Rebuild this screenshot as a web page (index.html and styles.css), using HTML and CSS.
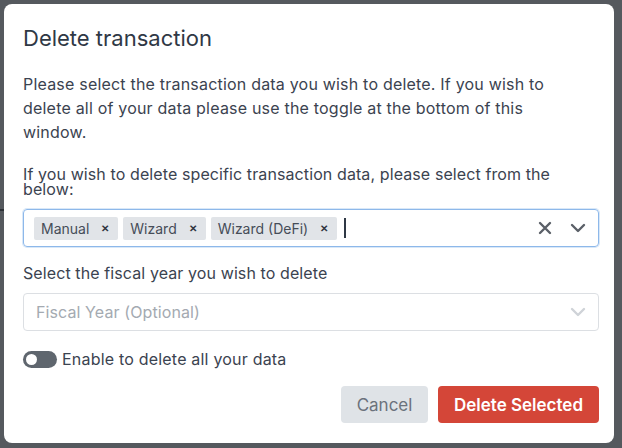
FILE: index.html
```html
<!DOCTYPE html>
<html lang="en">

<head>
    <title>Delete transaction</title>
    <link rel="stylesheet" href="styles.css">
</head>

<body>
    <div class="backdrop-line"></div>
    <div class="modal">
        <h2 class="title">Delete transaction</h2>
        <p class="intro">Please select the transaction data you wish to delete. If you wish to delete all of your data please use the toggle at the bottom of this window.</p>

        <label class="label label-tight">If you wish to delete specific transaction data, please select from the below:</label>
        <div class="multi focused">
            <div class="chips">
                <span class="chip">Manual <span class="chip-x">&#x2715;</span></span>
                <span class="chip">Wizard <span class="chip-x">&#x2715;</span></span>
                <span class="chip">Wizard (DeFi) <span class="chip-x">&#x2715;</span></span>
                <span class="caret"></span>
            </div>
            <div class="indicators">
                <svg class="clear" width="14" height="14" viewBox="0 0 14 14">
                    <path d="M2 2 L12 12 M12 2 L2 12" stroke="#5b6068" stroke-width="2.4" stroke-linecap="round" />
                </svg>
                <svg class="chevron" width="16" height="10" viewBox="0 0 16 10">
                    <path d="M2 2 L8 8 L14 2" fill="none" stroke="#5b6068" stroke-width="2.4" stroke-linecap="round" stroke-linejoin="round" />
                </svg>
            </div>
        </div>

        <label class="label label-fiscal">Select the fiscal year you wish to delete</label>
        <div class="multi select">
            <span class="placeholder">Fiscal Year (Optional)</span>
            <svg class="chevron" width="16" height="10" viewBox="0 0 16 10">
                <path d="M2 2 L8 8 L14 2" fill="none" stroke="#cfd3d8" stroke-width="2.4" stroke-linecap="round" stroke-linejoin="round" />
            </svg>
        </div>

        <div class="toggle-row">
            <span class="toggle"><span class="knob"></span></span>
            <span>Enable to delete all your data</span>
        </div>

        <div class="actions">
            <button class="btn btn-cancel">Cancel</button>
            <button class="btn btn-delete">Delete Selected</button>
        </div>
    </div>
</body>

</html>
```

FILE: styles.css
```css
body {
    margin: 0;
    background: #55595e;
    font-family: Inter, "Noto Sans", sans-serif;
    color: #3b4350;
    width: 622px;
    height: 448px;
    overflow: hidden;
    position: relative;
}

.backdrop-line {
    position: absolute;
    left: 0;
    top: 209px;
    width: 4px;
    height: 2px;
    background: #2c3036;
}

.modal {
    box-sizing: border-box;
    margin: 4px 0 0 4px;
    width: 610px;
    height: 439px;
    background: #fff;
    border-radius: 8px;
    padding: 21px 15px 0 19px;
    display: flex;
    flex-direction: column;
}

.title {
    margin: 0;
    font-size: 22px;
    line-height: 26px;
    font-weight: 400;
    color: #2f3845;
}

.intro {
    margin: 21px 0 0;
    max-width: 560px;
    font-size: 16px;
    line-height: 24px;
    letter-spacing: 0.2px;
}

.label {
    display: block;
    font-size: 16px;
    letter-spacing: 0.1px;
}

.label-tight {
    margin-top: 23px;
    line-height: 15px;
}

.label-fiscal {
    margin-top: 16px;
    line-height: 20px;
}

.multi {
    box-sizing: border-box;
    height: 38px;
    border: 1px solid #dcdfe3;
    border-radius: 4px;
    display: flex;
    align-items: center;
    justify-content: space-between;
    padding: 0 12px 0 10px;
}

.multi.focused {
    margin-top: 12px;
    border-color: #8db8ea;
    box-shadow: 0 0 0 1px #d9e8f8;
}

.select {
    margin-top: 10px;
    padding-left: 12px;
}

.chips {
    display: flex;
    align-items: center;
    gap: 5px;
}

.chip {
    display: inline-flex;
    align-items: center;
    justify-content: space-between;
    height: 23px;
    padding: 0 9px 0 7px;
    gap: 12px;
    background: #e1e4e8;
    border-radius: 2px;
    font-size: 14px;
    color: #464d58;
}

.chip-x {
    font-size: 10px;
    font-weight: 700;
    color: #2f3540;
}

.caret {
    width: 2px;
    height: 20px;
    background: #2f3845;
    margin-left: 2px;
}

.indicators {
    display: flex;
    align-items: center;
    gap: 18px;
}

.placeholder {
    font-size: 16px;
    color: #a4aab1;
    letter-spacing: 0.1px;
}

.toggle-row {
    margin-top: 18px;
    height: 20px;
    display: flex;
    align-items: center;
    gap: 5px;
    font-size: 16px;
    letter-spacing: 0.2px;
}

.toggle {
    width: 34px;
    height: 17px;
    border-radius: 9px;
    background: #5f666e;
    display: flex;
    align-items: center;
    padding-left: 3px;
    box-sizing: border-box;
}

.knob {
    width: 11px;
    height: 11px;
    border-radius: 50%;
    background: #fff;
}

.actions {
    margin-top: 17px;
    display: flex;
    justify-content: flex-end;
    gap: 10px;
}

.btn {
    height: 37px;
    border: none;
    border-radius: 4px;
    font-family: inherit;
    font-size: 17px;
    cursor: pointer;
}

.btn-cancel {
    width: 87px;
    background: #dfe3e7;
    color: #6b727c;
}

.btn-delete {
    width: 161px;
    background: #d44638;
    color: #fff;
    font-weight: 600;
}
```
